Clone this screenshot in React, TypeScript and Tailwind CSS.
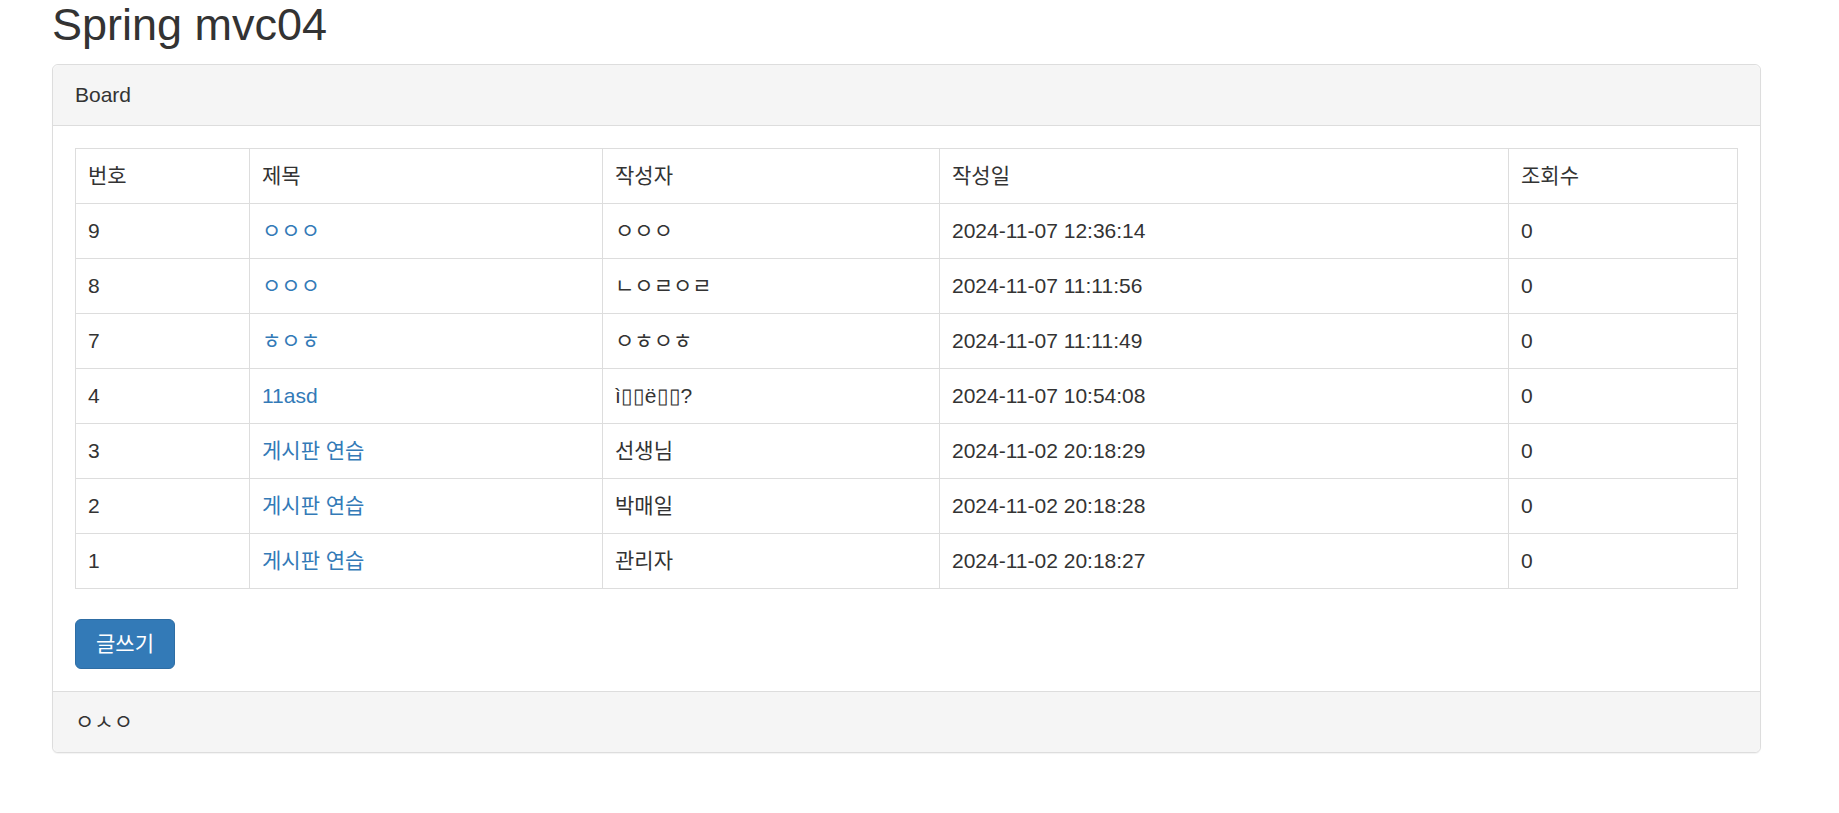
import React from 'react';

type Row = { idx: number; title: string; writer: string; indate: string; count: number };

// board rows, newest first
const rows: Row[] = [
  { idx: 9, title: 'ㅇㅇㅇ', writer: 'ㅇㅇㅇ', indate: '2024-11-07 12:36:14', count: 0 },
  { idx: 8, title: 'ㅇㅇㅇ', writer: 'ㄴㅇㄹㅇㄹ', indate: '2024-11-07 11:11:56', count: 0 },
  { idx: 7, title: 'ㅎㅇㅎ', writer: 'ㅇㅎㅇㅎ', indate: '2024-11-07 11:11:49', count: 0 },
  { idx: 4, title: '11asd', writer: 'ì▯▯ë▯▯?', indate: '2024-11-07 10:54:08', count: 0 },
  { idx: 3, title: '게시판 연습', writer: '선생님', indate: '2024-11-02 20:18:29', count: 0 },
  { idx: 2, title: '게시판 연습', writer: '박매일', indate: '2024-11-02 20:18:28', count: 0 },
  { idx: 1, title: '게시판 연습', writer: '관리자', indate: '2024-11-02 20:18:27', count: 0 },
];

const cell = 'border border-[#ddd] px-[12px] py-[12px] align-top';

export default function App() {
  return (
    <div
      className="min-h-screen bg-white text-[#333] text-[21px] leading-[30px]"
      style={{ fontFamily: '"Liberation Sans", Arial, "Noto Sans CJK KR", sans-serif' }}
    >
      <div className="ml-[52px] w-[1709px]">
        <h2 className="text-[45px] leading-[49.5px] font-normal mb-[14px]">Spring mvc04</h2>

        <div className="border border-[#ddd] rounded-[6px] shadow-[0_1px_1px_rgba(0,0,0,0.05)] bg-white">
          <div className="bg-[#f5f5f5] border-b border-[#ddd] rounded-t-[6px] px-[22px] py-[15px]">Board</div>

          <div className="p-[22px]">
            <table className="w-[1662px] border-collapse mb-[30px] table-fixed">
              <colgroup>
                <col className="w-[174px]" />
                <col className="w-[353px]" />
                <col className="w-[337px]" />
                <col className="w-[569px]" />
                <col className="w-[229px]" />
              </colgroup>
              <tbody>
                <tr>
                  <td className={cell}>번호</td>
                  <td className={cell}>제목</td>
                  <td className={cell}>작성자</td>
                  <td className={cell}>작성일</td>
                  <td className={cell}>조회수</td>
                </tr>
                {rows.map(r => (
                  <tr key={r.idx}>
                    <td className={cell}>{r.idx}</td>
                    <td className={cell}>
                      <a href="#" className="text-[#337ab7] no-underline">{r.title}</a>
                    </td>
                    <td className={cell}>{r.writer}</td>
                    <td className={cell}>{r.indate}</td>
                    <td className={cell}>{r.count}</td>
                  </tr>
                ))}
              </tbody>
            </table>

            <button className="bg-[#337ab7] border border-[#2e6da4] text-white rounded-[6px] px-[20px] py-[9px] leading-[30px]">
              글쓰기
            </button>
          </div>

          <div className="bg-[#f5f5f5] border-t border-[#ddd] rounded-b-[6px] px-[22px] py-[15px]">ㅇㅅㅇ</div>
        </div>
      </div>
    </div>
  );
}
